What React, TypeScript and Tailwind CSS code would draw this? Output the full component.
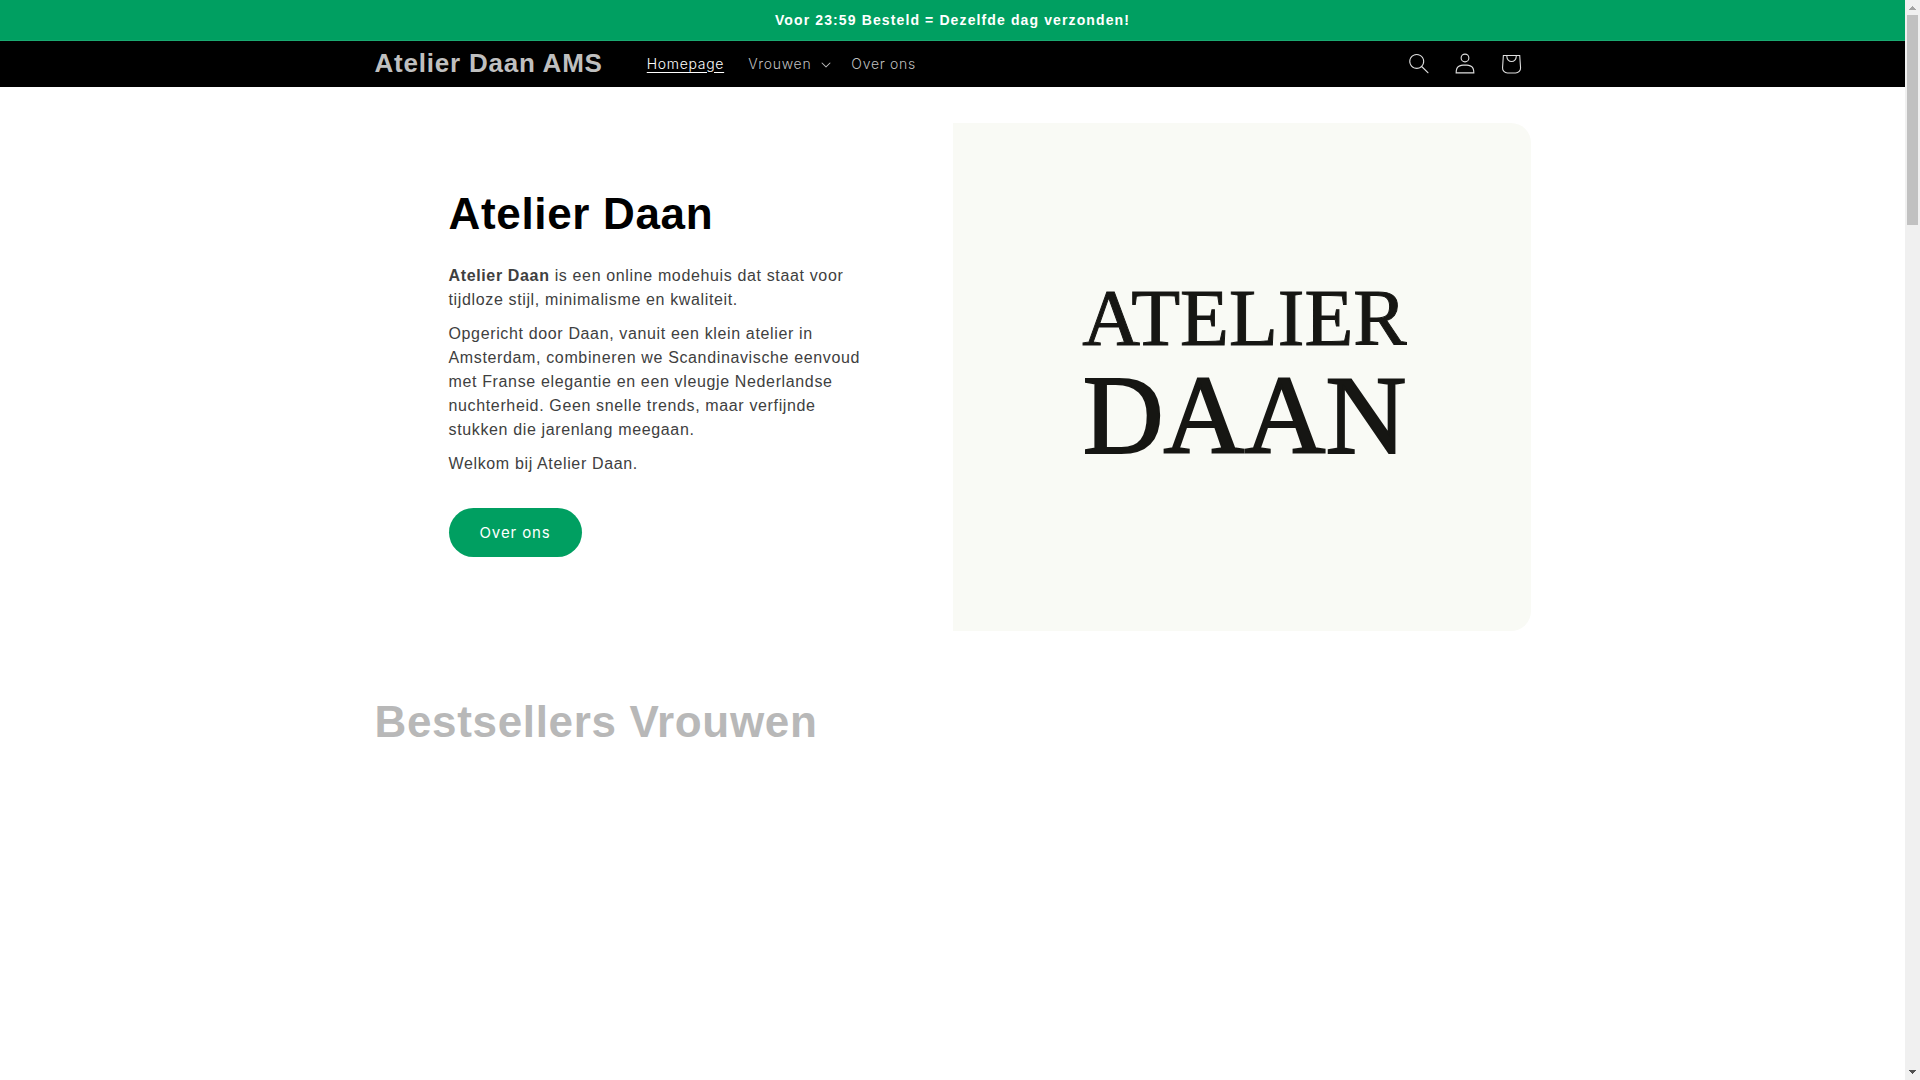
import React from "react";

interface NavItem {
  label: string;
  active?: boolean;
  hasMenu?: boolean;
}

const navItems: NavItem[] = [
  { label: "Homepage", active: true },
  { label: "Vrouwen", hasMenu: true },
  { label: "Over ons" },
];

const SearchIcon = () => (
  <svg viewBox="0 0 18 19" className="h-[21px] w-5" fill="currentColor" aria-hidden="true">
    <path
      fillRule="evenodd"
      clipRule="evenodd"
      d="M11.03 11.68A5.784 5.784 0 112.85 3.5a5.784 5.784 0 018.18 8.18zm.26 1.12a6.78 6.78 0 11.72-.7l5.4 5.4a.5.5 0 11-.71.7l-5.41-5.4z"
    />
  </svg>
);

const AccountIcon = () => (
  <svg viewBox="0 0 18 19" className="h-[21px] w-5" fill="currentColor" aria-hidden="true">
    <path
      fillRule="evenodd"
      clipRule="evenodd"
      d="M6 4.5a3 3 0 116 0 3 3 0 01-6 0zm3-4a4 4 0 100 8 4 4 0 000-8zm5.58 12.15c1.12.83 1.83 2.24 1.91 4.85H1.51c.08-2.6.79-4.02 1.9-4.85C4.66 11.75 6.5 11.5 9 11.5s4.35.26 5.58 1.15zM9 10.5c-2.5 0-4.65.24-6.17 1.35C1.27 12.98.5 14.93.5 18v.5h17V18c0-3.07-.77-5.02-2.33-6.15-1.52-1.1-3.67-1.35-6.17-1.35z"
    />
  </svg>
);

const CartIcon = () => (
  <svg viewBox="0 0 40 40" className="size-11" fill="currentColor" aria-hidden="true">
    <path
      fillRule="evenodd"
      d="M15.75 11.8h-3.16l-.77 11.6a5 5 0 0 0 4.99 5.34h7.38a5 5 0 0 0 4.99-5.33l-.78-11.61zm0 1h-2.22l-.71 10.67a4 4 0 0 0 3.99 4.27h7.38a4 4 0 0 0 4-4.27l-.72-10.67h-2.22v.63a4.75 4.75 0 1 1-9.5 0zm8.5 0h-7.5v.63a3.75 3.75 0 1 0 7.5 0z"
    />
  </svg>
);

const CaretIcon = () => (
  <svg viewBox="0 0 10 6" className="mt-[3px] h-[6px] w-[10px]" fill="currentColor" aria-hidden="true">
    <path
      fillRule="evenodd"
      clipRule="evenodd"
      d="M9.354.646a.5.5 0 00-.708 0L5 4.293 1.354.646a.5.5 0 00-.708.708l4 4a.5.5 0 00.708 0l4-4a.5.5 0 000-.708z"
    />
  </svg>
);

const Header = () => (
  <header className="bg-black pb-px">
    <div className="mx-auto flex h-[45px] max-w-[1256px] items-center px-[50px]">
      <a href="#" className="text-[26px] font-bold tracking-[0.03em] whitespace-nowrap text-[#bfbfbf]">
        Atelier Daan AMS
      </a>
      <nav className="ml-8 flex items-center font-['Inter',sans-serif] text-sm font-light tracking-[0.05em]">
        {navItems.map((item) =>
          item.hasMenu ? (
            <button key={item.label} className="flex items-center gap-[10px] pr-2 pl-3 text-[#bfbfbf]">
              {item.label}
              <CaretIcon />
            </button>
          ) : (
            <a
              key={item.label}
              href="#"
              className={item.active ? "px-3 text-white underline underline-offset-3" : "px-3 text-[#bfbfbf]"}
            >
              {item.label}
            </a>
          )
        )}
      </nav>
      <div className="-mr-[2px] ml-auto flex items-center gap-[2px] text-[#dedede]">
        <button aria-label="Zoeken" className="flex size-11 items-center justify-center">
          <SearchIcon />
        </button>
        <a href="#" aria-label="Inloggen" className="flex size-11 items-center justify-center">
          <AccountIcon />
        </a>
        <a href="#" aria-label="Winkelwagen" className="flex size-11 items-center justify-center">
          <CartIcon />
        </a>
      </div>
    </div>
  </header>
);

const Hero = () => (
  <section className="grid min-h-[508px] grid-cols-2">
    <div className="flex flex-col items-start justify-center pr-20 pb-3 pl-[74px]">
      <h2 className="text-[44px] leading-[57px] font-bold tracking-[0.015em] text-black">Atelier Daan</h2>
      <div className="mt-[22px] flex max-w-[420px] flex-col gap-[10px] text-base leading-6 tracking-[0.04em] text-[#404040]">
        <p>
          <strong>Atelier Daan</strong> is een online modehuis dat staat voor tijdloze stijl, minimalisme en kwaliteit.
        </p>
        <p>
          Opgericht door Daan, vanuit een klein atelier in Amsterdam, combineren we Scandinavische eenvoud met Franse
          elegantie en een vleugje Nederlandse nuchterheid. Geen snelle trends, maar verfijnde stukken die jarenlang
          meegaan.
        </p>
        <p>Welkom bij Atelier Daan.</p>
      </div>
      <a
        href="#"
        className="mt-8 rounded-full bg-[#009f61] px-[31px] py-3 font-['Inter',sans-serif] text-[15px] leading-[25px] tracking-[0.06em] text-white"
      >
        Over ons
      </a>
    </div>
    <div className="flex flex-col items-center justify-center gap-2 rounded-r-[20px] bg-[#f9faf5] pb-2 pl-[6px] font-['Liberation_Serif',serif] text-[#161613]">
      <span className="text-[80px] leading-[76px] [-webkit-text-stroke:1px_#161613]">ATELIER</span>
      <span className="text-[112px] leading-[102px] [-webkit-text-stroke:2px_#161613]">DAAN</span>
    </div>
  </section>
);

// Static scroll rail along the right edge of the window
const ScrollRail = () => (
  <div className="flex w-[15px] shrink-0 flex-col items-center justify-between bg-[#f0f0f0]" aria-hidden="true">
    <div className="flex flex-col items-center">
      <svg viewBox="0 0 15 15" className="size-[15px]" shapeRendering="crispEdges">
        <path d="M4 10h7v-1h-1v-1h-1v-1h-1v-1h-1v1h-1v1h-1v1h-1z" fill="#a3a3a3" />
      </svg>
      <div className="h-[210px] w-[11px] bg-[#c1c1c1]" />
    </div>
    <svg viewBox="0 0 15 15" className="size-[15px]" shapeRendering="crispEdges">
      <path d="M4 5h7v1h-1v1h-1v1h-1v1h-1v-1h-1v-1h-1v-1h-1z" fill="#505050" />
    </svg>
  </div>
);

const App: React.FC = () => {
  return (
    <div className="flex h-screen bg-white font-['Liberation_Sans',Arial,sans-serif]">
      <div className="min-w-0 flex-1 overflow-hidden">
        <div className="border-b border-[#1aa971] bg-[#009f61] py-2 text-center text-sm leading-6 font-bold tracking-[0.08em] text-white">
          Voor 23:59 Besteld = Dezelfde dag verzonden!
        </div>
        <Header />
        <main className="mx-auto max-w-[1256px] px-[50px] pt-9">
          <Hero />
          <h2 className="mt-[62px] text-[44px] leading-[57px] font-bold tracking-[0.015em] text-[#b8b8b8]">
            Bestsellers Vrouwen
          </h2>
        </main>
      </div>
      <ScrollRail />
    </div>
  );
};

export default App;
